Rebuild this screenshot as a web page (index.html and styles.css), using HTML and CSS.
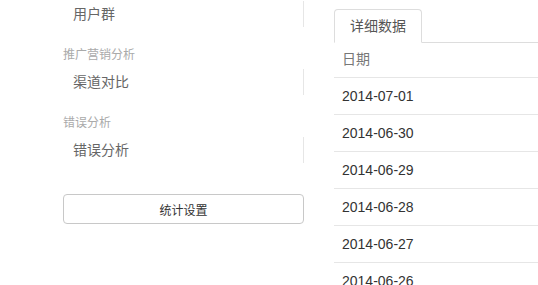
FILE: index.html
```html
<!DOCTYPE html>
<html lang="zh-CN">
<head>
<meta charset="utf-8">
<title>统计</title>
<link rel="stylesheet" href="styles.css">
</head>
<body>
<div class="page">
  <aside class="sidebar">
    <ul class="nav">
      <li class="nav-item">用户群</li>
    </ul>
    <div class="nav-label">推广营销分析</div>
    <ul class="nav">
      <li class="nav-item">渠道对比</li>
    </ul>
    <div class="nav-label">错误分析</div>
    <ul class="nav">
      <li class="nav-item">错误分析</li>
    </ul>
    <button class="btn" type="button">统计设置</button>
  </aside>
  <main class="main">
    <ul class="tabs">
      <li class="tab active">详细数据</li>
    </ul>
    <table class="table">
      <thead>
        <tr><th>日期</th></tr>
      </thead>
      <tbody>
        <tr><td>2014-07-01</td></tr>
        <tr><td>2014-06-30</td></tr>
        <tr><td>2014-06-29</td></tr>
        <tr><td>2014-06-28</td></tr>
        <tr><td>2014-06-27</td></tr>
        <tr><td>2014-06-26</td></tr>
      </tbody>
    </table>
  </main>
</div>
</body>
</html>
```

FILE: styles.css
```css
html, body {
  margin: 0;
  padding: 0;
  background: #fff;
  overflow: hidden;
}
body {
  font-family: "Liberation Sans", "Noto Sans CJK SC", sans-serif;
  font-size: 14px;
  color: #333;
}
.page {
  display: flex;
  gap: 30px;
  padding-left: 63px;
}
.sidebar {
  width: 241px;
  flex: none;
  padding-top: 1px;
}
.nav {
  list-style: none;
  margin: 0;
  padding: 0;
}
.nav-item {
  padding: 3px 10px;
  line-height: 20px;
  font-size: 14px;
  color: #666;
  border-right: 1px solid #e6e6e6;
}
.nav-label {
  margin: 20px 0 6px;
  font-size: 12px;
  line-height: 16px;
  color: #aaa;
}
.btn {
  display: block;
  width: 241px;
  height: 30px;
  margin-top: 31px;
  padding: 0;
  border: 1px solid #c8c8c8;
  border-radius: 4px;
  background: #fff;
  font-family: "Liberation Sans", "Noto Sans CJK SC", sans-serif;
  font-size: 12px;
  color: #333;
}
.main {
  flex: 1;
  min-width: 0;
  padding-top: 9px;
}
.tabs {
  list-style: none;
  margin: 0;
  padding: 0;
  display: flex;
  border-bottom: 1px solid #ddd;
}
.tab {
  margin-bottom: -1px;
  padding: 6px 15px;
  line-height: 20px;
  color: #555;
  border: 1px solid transparent;
  border-radius: 4px 4px 0 0;
}
.tab.active {
  border-color: #ddd #ddd transparent;
  background: #fff;
}
.table {
  width: 100%;
  border-collapse: collapse;
}
.table th {
  text-align: left;
  font-weight: normal;
  color: #777;
  padding: 6px 8px 8px;
  line-height: 20px;
  border-bottom: 1px solid #e6e6e6;
}
.table td {
  padding: 8px;
  line-height: 20px;
  border-top: 1px solid #e6e6e6;
  color: #333;
}
```
